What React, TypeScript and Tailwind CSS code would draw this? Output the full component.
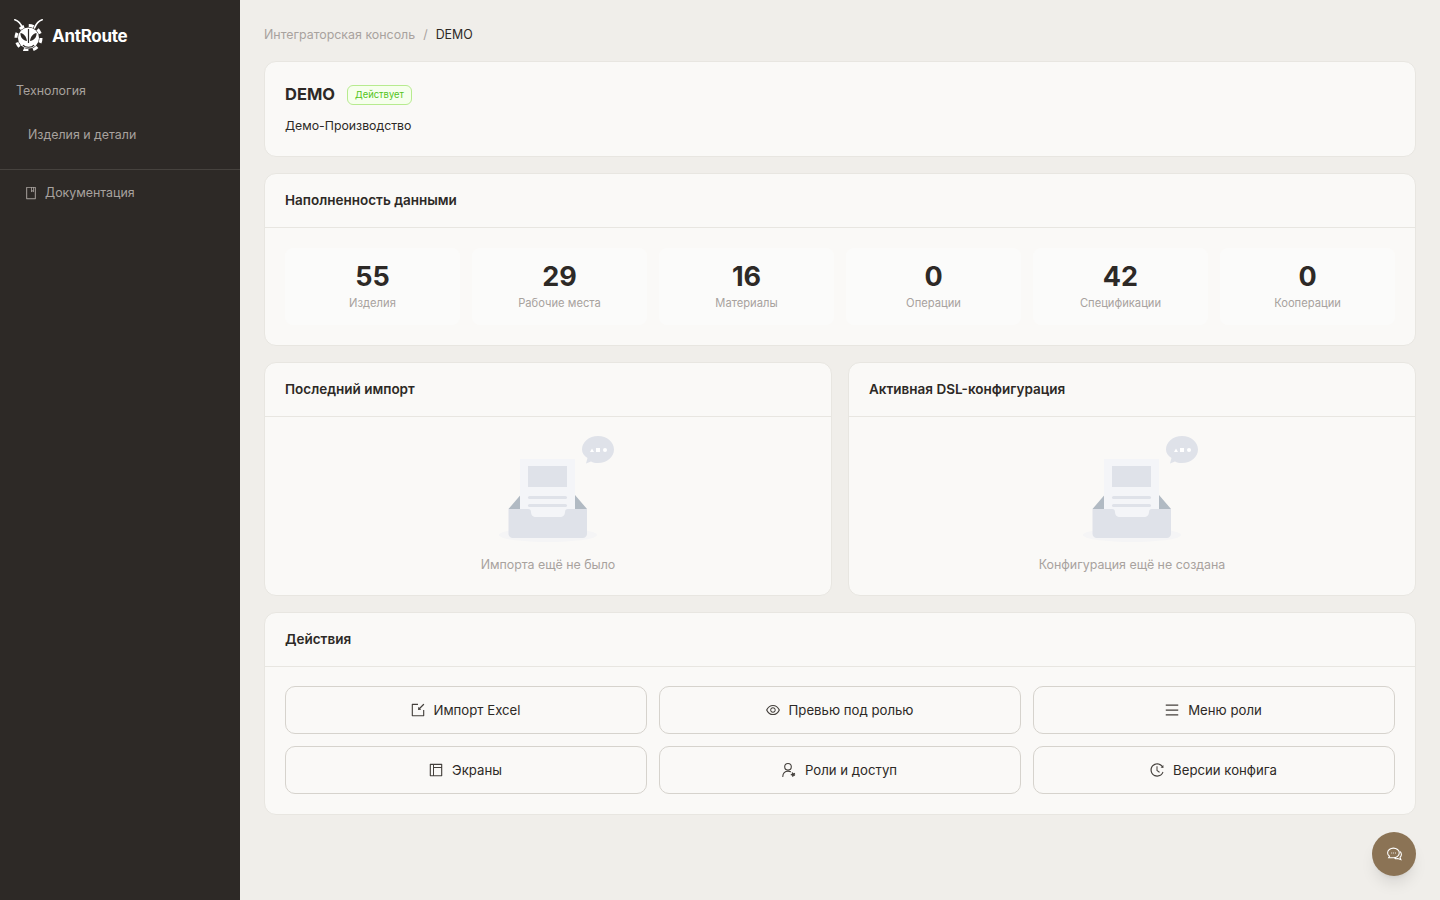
import type { ReactNode } from "react";
import {
  AiOutlineBook,
  AiOutlineEye,
  AiOutlineHistory,
  AiOutlineImport,
  AiOutlineLayout,
  AiOutlineMenu,
} from "react-icons/ai";

const STATS = [
  { value: "55", label: "Изделия" },
  { value: "29", label: "Рабочие места" },
  { value: "16", label: "Материалы" },
  { value: "0", label: "Операции" },
  { value: "42", label: "Спецификации" },
  { value: "0", label: "Кооперации" },
];

function AntLogo() {
  return (
    <svg width="29" height="32" viewBox="0 0 29 32" fill="none" className="shrink-0">
      <path d="M8.500 9C7 5 4.500 2 .8 .8M20.500 9C22 5 24.500 2 28.200 .8" stroke="white" strokeWidth="1.600" strokeLinecap="round" />
      <circle cx="14.500" cy="19" r="10.500" fill="white" />
      <circle cx="14.500" cy="19" r="12.500" stroke="white" strokeWidth="3" strokeDasharray="5 4.800" />
      <path d="M6.500 14c3 .5 6 3.500 6.500 8-3.500-.5-7-3.500-6.500-8zM22.500 14c-3 .5-6 3.500-6.500 8 3.500-.5 7-3.500 6.500-8z" fill="#2d2926" />
      <path d="M14.500 10v14M9 26c2 3 9 3 11 0" stroke="#2d2926" strokeWidth="1.200" />
    </svg>
  );
}

function RoleIcon() {
  return (
    <svg width="16" height="16" viewBox="0 0 16 16" fill="none" stroke="currentColor" strokeWidth="1.100">
      <circle cx="7" cy="4.800" r="3.300" />
      <path d="M1.800 14.500c0-3 2-5.400 5.200-5.400 1 0 1.800.2 2.500.6" strokeLinecap="round" />
      <circle cx="12" cy="12.500" r="1.500" fill="currentColor" strokeWidth="1.500" strokeDasharray="1 .8" />
    </svg>
  );
}

function EmptyIllustration() {
  return (
    <svg width="120" height="112" viewBox="0 0 120 112" fill="none">
      <ellipse cx="52" cy="102" rx="49" ry="7" fill="#f5f5f6" />
      <path d="M12.500 76l12-14v14zM91 76L79 62v14z" fill="#b1bac3" />
      <rect x="24" y="26" width="55" height="62" fill="#f4f5f8" />
      <rect x="32" y="33" width="39" height="21" fill="#dfe2e9" />
      <rect x="32" y="63" width="39" height="3" rx="1.500" fill="#dfe2e9" />
      <rect x="32" y="71" width="39" height="3" rx="1.500" fill="#dfe2e9" />
      <path
        d="M12.500 76h19.500c2 0 3 1 3 3 0 3 2 5 5 5h24c3 0 5-2 5-5 0-2 1-3 3-3h19v25c0 2-2 4-4 4H16.500c-2 0-4-2-4-4z"
        fill="#dfe2e9"
      />
      <path d="M102 3c9 0 16 6 16 13.500S111 30 102 30c-3 0-5-.5-7-1.500l-5 2 1.500-5.500C88 23 86 20 86 16.500 86 9 93 3 102 3z" fill="#dfe2e9" />
      <path d="M94 19l2-3.500 2 3.500z" fill="#fff" />
      <rect x="100" y="15" width="4" height="4" fill="#fff" />
      <circle cx="109" cy="17" r="2" fill="#fff" />
    </svg>
  );
}

function Card({ title, children }: { title: string; children: ReactNode }) {
  return (
    <section className="rounded-xl border border-[#e8e6e1] bg-[#faf9f7]">
      <div className="flex h-[54px] items-center border-b border-[#e8e6e1] px-5 text-[13.5px] font-semibold text-[#2d2926]">
        {title}
      </div>
      {children}
    </section>
  );
}

function ActionButton({ icon, children }: { icon: ReactNode; children: ReactNode }) {
  return (
    <button
      type="button"
      className="flex h-12 items-center justify-center gap-2 rounded-[10px] border border-[#d6d3cd] bg-[#faf9f7] pr-[2px] text-[13.2px] text-[#2d2926]"
    >
      <span className="text-base text-[#44403c]">{icon}</span>
      <span className="pt-[2px]">{children}</span>
    </button>
  );
}

function EmptyCard({ title, text }: { title: string; text: string }) {
  return (
    <Card title={title}>
      <div className="flex h-[178px] flex-col items-center pt-4">
        <div className="ml-4">
          <EmptyIllustration />
        </div>
        <div className="mt-[10px] text-[12.4px] leading-5 text-[#a8a29e]">{text}</div>
      </div>
    </Card>
  );
}

export default function App() {
  return (
    <div className="flex min-h-[900px] bg-[#f0eeea] font-['Inter','Noto_Sans',sans-serif]">
      <aside className="w-60 shrink-0 bg-[#2d2926]">
        <div className="flex h-[70px] items-center gap-[9px] pl-[14px]">
          <AntLogo />
          <span className="pt-1 text-[17px] font-bold tracking-[-0.3px] text-white">AntRoute</span>
        </div>
        <div className="mt-[11px] pl-4 text-[12.4px] leading-5 text-[#a8a29e]">Технология</div>
        <div className="mt-6 pl-7 text-[12.4px] leading-5 text-[#a8a29e]">Изделия и детали</div>
        <div className="mt-6 border-t border-[#46423e]" />
        <div className="mt-[13px] flex items-center gap-[7px] pl-6 text-[12.4px] leading-5 text-[#a8a29e]">
          <AiOutlineBook className="text-sm" />
          Документация
        </div>
      </aside>
      <main className="flex-1 px-6 pt-[25px]">
        <div className="flex h-5 items-center gap-2 text-[12.4px]">
          <span className="text-[#a8a29e]">Интеграторская консоль</span>
          <span className="text-[#a8a29e]">/</span>
          <span className="text-[#2d2926]">DEMO</span>
        </div>
        <div className="mt-4 flex flex-col gap-4">
          <section className="h-24 rounded-xl border border-[#e8e6e1] bg-[#faf9f7] px-5 pt-[20px]">
            <div className="flex items-center gap-3">
              <span className="text-[16.5px] font-bold leading-6 text-[#2d2926]">DEMO</span>
              <span className="mt-[2px] flex h-5 items-center rounded-md border border-[#b7eb8f] bg-[#f6ffed] px-[7px] text-[9.4px] text-[#52c41a]">
                Действует
              </span>
            </div>
            <div className="mt-[10px] text-[12.3px] leading-5 text-[#2d2926]">Демо-Производство</div>
          </section>
          <Card title="Наполненность данными">
            <div className="grid grid-cols-6 gap-3 px-5 py-5">
              {STATS.map((stat) => (
                <div key={stat.label} className="flex h-[77px] flex-col items-center rounded-lg bg-[#fbfbfa] pt-[11px]">
                  <div className="text-[27px] font-bold leading-[35px] text-[#2d2926]">{stat.value}</div>
                  <div className="text-[11.2px] leading-[18px] text-[#a8a29e]">{stat.label}</div>
                </div>
              ))}
            </div>
          </Card>
          <div className="grid grid-cols-2 gap-4">
            <EmptyCard title="Последний импорт" text="Импорта ещё не было" />
            <EmptyCard title="Активная DSL-конфигурация" text="Конфигурация ещё не создана" />
          </div>
          <Card title="Действия">
            <div className="grid grid-cols-3 gap-3 px-5 pb-5 pt-[19px]">
              <ActionButton icon={<AiOutlineImport />}>Импорт Excel</ActionButton>
              <ActionButton icon={<AiOutlineEye />}>Превью под ролью</ActionButton>
              <ActionButton icon={<AiOutlineMenu />}>Меню роли</ActionButton>
              <ActionButton icon={<AiOutlineLayout />}>Экраны</ActionButton>
              <ActionButton icon={<RoleIcon />}>Роли и доступ</ActionButton>
              <ActionButton icon={<AiOutlineHistory />}>Версии конфига</ActionButton>
            </div>
          </Card>
        </div>
      </main>
      <button
        type="button"
        className="fixed bottom-6 right-6 flex size-11 items-center justify-center rounded-full bg-[#8b7355] shadow-lg"
      >
        <svg width="17" height="17" viewBox="0 0 16 16" fill="none" stroke="white" strokeWidth="1">
          <path d="M7 2c3 0 5.500 2 5.500 4.500S10 11 7 11H2.500l.8-1.500C2 8.600 1.500 7.600 1.500 6.500 1.500 4 4 2 7 2z" />
          <path d="M13 5c1 .8 1.500 1.800 1.500 3 0 1-.5 2-1.300 2.800l.8 2-3-1c-1 .2-2 .2-3-.3" />
          <path d="M5 6.500h.8M6.800 6.500h.8M8.600 6.500h.8" />
        </svg>
      </button>
    </div>
  );
}
